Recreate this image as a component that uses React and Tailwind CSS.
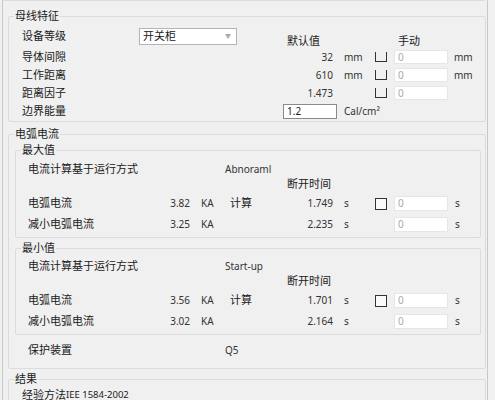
import React from 'react';

const GroupBox = ({ title, className = '', children }) => (
    <fieldset className={`border border-[#dcdcdc] rounded-[2px] ${className}`}>
        <legend className="ml-[5px] px-[1px] leading-[14px] text-[#1a1a1a]">{title}</legend>
        {children}
    </fieldset>
);

const Open = () => <div className="w-[12px] h-[10px] border-l border-r border-b border-[#333]" />;
const Check = () => <div className="w-[12px] h-[12px] border border-[#333] bg-[#fafafa]" />;

const Disabled = ({ h = 'h-[14px]' }) => (
    <div className={`w-[54px] ${h} bg-white border border-[#e6e6e6] flex items-center pl-[3px] text-[10px] text-[#aaa]`}>0</div>
);

const Num = ({ w, children }) => <div className={`${w} text-right text-[10px] text-[#333]`}>{children}</div>;
const Unit = ({ w = '', className = '', children }) => <div className={`${w} ${className} text-[10px] text-[#333]`}>{children}</div>;

const busRows = [
    { label: '导体间隙', value: '32', unit: 'mm', manualUnit: 'mm' },
    { label: '工作距离', value: '610', unit: 'mm', manualUnit: 'mm' },
    { label: '距离因子', value: '1.473', unit: '', manualUnit: '' },
];

const CurrentBlock = ({ title, mode, arc, arcTime, reduced, reducedTime, className, pt }) => (
    <GroupBox title={title} className={`ml-[6px] mr-[4px] pb-[2px] ${className}`}>
        <div className={`${pt} pl-[12px] flex flex-col`}>
            <div className="h-[16px] flex items-center">
                <div className="w-[197px]">电流计算基于运行方式</div>
                <div className="text-[10px] text-[#333]">{mode}</div>
            </div>
            <div className="h-[15px] flex items-center">
                <div className="w-[259px]" />
                <div>断开时间</div>
            </div>
            <div className="mt-[1px] h-[21px] flex items-center">
                <div className="w-[122px]">电弧电流</div>
                <Num w="w-[40px]">{arc}</Num>
                <Unit w="w-[29px]" className="ml-[11px]">KA</Unit>
                <div className="w-[60px]">计算</div>
                <Num w="w-[43px]">{arcTime}</Num>
                <Unit w="w-[31px]" className="ml-[11px]">s</Unit>
                <Check />
                <div className="ml-[7px]"><Disabled h="h-[15px]" /></div>
                <Unit className="ml-[7px]">s</Unit>
            </div>
            <div className="h-[21px] flex items-center">
                <div className="w-[122px]">减小电弧电流</div>
                <Num w="w-[40px]">{reduced}</Num>
                <Unit w="w-[29px]" className="ml-[11px]">KA</Unit>
                <div className="w-[60px]" />
                <Num w="w-[43px]">{reducedTime}</Num>
                <Unit w="w-[31px]" className="ml-[11px]">s</Unit>
                <div className="w-[12px]" />
                <div className="ml-[7px]"><Disabled h="h-[15px]" /></div>
                <Unit className="ml-[7px]">s</Unit>
            </div>
        </div>
    </GroupBox>
);

export default function App() {
    return (
        <div className="w-[495px] h-[400px] overflow-hidden bg-[#f0f0f0] text-[11px] text-[#1a1a1a] font-['Noto_Sans','Noto_Sans_CJK_SC',sans-serif]">
            <div className="ml-[2px] w-[486px] h-[400px] border-l border-r border-[#c8c8c8] flex flex-col">
                {/* previous section, cut off */}
                <div className="h-[5px] mr-[2px] border-b border-r border-[#dcdcdc]" />

                {/* 母线特征 */}
                <GroupBox title="母线特征" className="mt-[8px] ml-[5px] mr-[1px] pb-[1px]">
                    <div className="pt-[4px] pl-[13px] flex flex-col">
                        <div className="h-[21px] flex items-start">
                            <div className="w-[117px] h-[17px] mt-[1px] flex items-center">设备等级</div>
                            <div className="w-[98px] h-[17px] mt-[1px] bg-white border border-[#b4b4b4] flex items-center justify-between pl-[3px] pr-[5px]">
                                <span>开关柜</span>
                                <span className="text-[6px] text-[#aaa]">▼</span>
                            </div>
                            <div className="ml-[50px] mt-[7px] w-[111px] leading-[14px]">默认值</div>
                            <div className="mt-[7px] leading-[14px]">手动</div>
                        </div>
                        {busRows.map((r) => (
                            <div key={r.label} className="h-[18px] flex items-center">
                                <div className="w-[228px]">{r.label}</div>
                                <Num w="w-[83px]">{r.value}</Num>
                                <Unit w="w-[31px]" className="ml-[11px]">{r.unit}</Unit>
                                <Open />
                                <div className="ml-[7px]"><Disabled /></div>
                                <Unit className="ml-[6px]">{r.manualUnit}</Unit>
                            </div>
                        ))}
                        <div className="h-[18px] flex items-center">
                            <div className="w-[261px]">边界能量</div>
                            <div className="w-[54px] h-[15px] bg-white border border-[#8a8a8a] flex items-center pl-[3px] text-[10px] text-[#222]">1.2</div>
                            <Unit className="ml-[7px]">Cal/cm²</Unit>
                        </div>
                    </div>
                </GroupBox>

                {/* 电弧电流 */}
                <GroupBox title="电弧电流" className="mt-[5px] ml-[5px] mr-[1px] pb-[9px]">
                    <CurrentBlock
                        title="最大值"
                        className="mt-[2px]"
                        pt="pt-[4px]"
                        mode="Abnoraml"
                        arc="3.82"
                        arcTime="1.749"
                        reduced="3.25"
                        reducedTime="2.235"
                    />
                    <CurrentBlock
                        title="最小值"
                        className="mt-[3px]"
                        pt="pt-[3px]"
                        mode="Start-up"
                        arc="3.56"
                        arcTime="1.701"
                        reduced="3.02"
                        reducedTime="2.164"
                    />
                    <div className="mt-[6px] h-[18px] pl-[19px] flex items-center">
                        <div className="w-[197px]">保护装置</div>
                        <div className="text-[10px] text-[#333]">Q5</div>
                    </div>
                </GroupBox>

                {/* 结果 */}
                <GroupBox title="结果" className="mt-[3px] ml-[5px] mr-[1px] h-[60px]">
                    <div className="pt-[3px] pl-[13px] h-[16px] flex items-center">
                        经验方法<span className="text-[9.5px]">IEE 1584-2002</span>
                    </div>
                </GroupBox>
            </div>
        </div>
    );
}
